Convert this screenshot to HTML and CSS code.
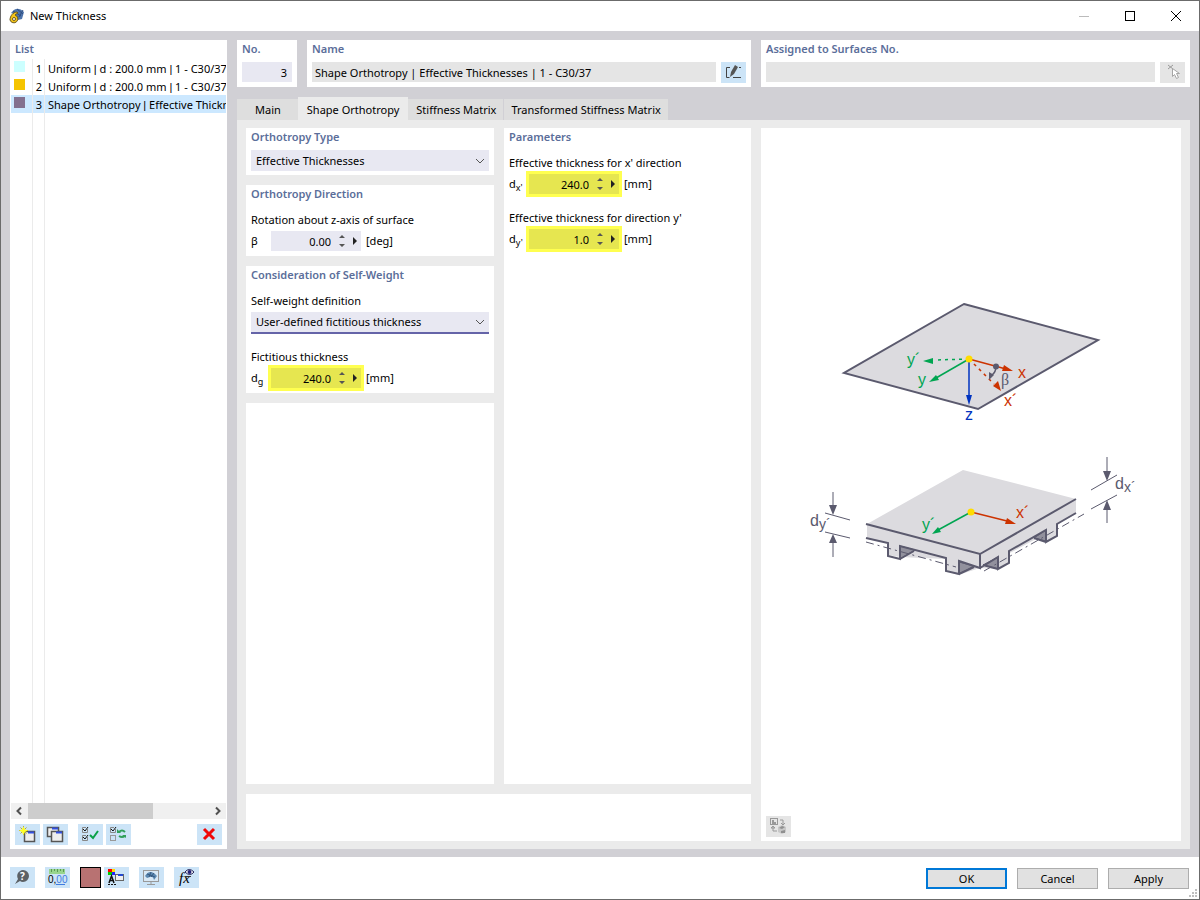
FILE: index.html
```html
<!DOCTYPE html>
<html lang="en">
<head>
    <meta charset="UTF-8">
    <meta name="viewport" content="width=device-width, initial-scale=1.0">
    <title>New Thickness</title>
    <link rel="stylesheet" href="styles.css">
</head>
<body>
    <div class="window">
        <header class="titlebar">
            <svg class="app-icon" width="16" height="16" viewBox="0 0 16 16">
                <path d="M2 5 Q8 -3 15 4 L13 11 L9 12 L5 6 Z" fill="#4d74ac"/>
                <path d="M4 3 L12 8 M8 1 L14 6 M10 9 L14 2" stroke="#2f4d80" fill="none"/>
                <path d="M8 4 C4 4 1 8 1 12 A4 4 0 1 0 6 7 Q7 6 9 5 Z" fill="#f5c518" stroke="#6b5a20"/>
                <circle cx="5" cy="11" r="1.5" fill="#fff" stroke="#6b5a20"/>
            </svg>
            <h1>New Thickness</h1>
            <div class="window-buttons">
                <button aria-label="Minimize" disabled><svg width="12" height="12"><path d="M1 6.500h10" stroke="#bbb"/></svg></button>
                <button aria-label="Maximize"><svg width="12" height="12"><rect x="1.500" y="1.500" width="9" height="9" fill="none" stroke="#000"/></svg></button>
                <button aria-label="Close"><svg width="12" height="12"><path d="M1 1l10 10M11 1L1 11" stroke="#000"/></svg></button>
            </div>
        </header>

        <main class="content">
            <section class="panel list-panel">
                <h2>List</h2>
                <div class="list">
                    <table>
                        <tr><td class="color"><span class="swatch cyan"></span></td><td class="num">1</td><td>Uniform <i>|</i> d : 200.0 mm <i>|</i> 1 - C30/37</td></tr>
                        <tr><td class="color"><span class="swatch orange"></span></td><td class="num">2</td><td>Uniform <i>|</i> d : 200.0 mm <i>|</i> 1 - C30/37</td></tr>
                        <tr class="selected"><td class="color"><span class="swatch purple"></span></td><td class="num">3</td><td>Shape Orthotropy <i>|</i> Effective Thicknesses</td></tr>
                        <tr class="rest"><td></td><td></td><td></td></tr>
                    </table>
                </div>
                <div class="scrollbar">
                    <button aria-label="Scroll left"><svg width="16" height="16"><path d="M10 4.500L6.500 8l3.500 3.500" fill="none" stroke="#505050" stroke-width="2"/></svg></button>
                    <div class="track"><div class="thumb"></div></div>
                    <button aria-label="Scroll right"><svg width="16" height="16"><path d="M7 4.500L10.500 8 7 11.500" fill="none" stroke="#505050" stroke-width="2"/></svg></button>
                </div>
                <div class="toolbar">
                    <button class="tool" aria-label="New">
                        <svg width="25" height="21"><rect x="9.500" y="7.500" width="10" height="10" fill="#eee" stroke="#555" stroke-width="1.500"/><path d="M13 8.500h6" stroke="#3250e0" stroke-width="2"/><path d="M8.500 2v9M4 6.500h9M5.500 3.500l6 6M11.500 3.500l-6 6" stroke="#b5a83a"/><path d="M8.500 2.500l1.500 3 3 1-3 1.500-1.500 3-1.500-3-3-1.500 3-1z" fill="#ff2"/></svg>
                    </button>
                    <button class="tool" aria-label="Copy">
                        <svg width="25" height="21"><rect x="4.500" y="3.500" width="11" height="9" fill="#eee" stroke="#555" stroke-width="1.500"/><path d="M9 4.500h6" stroke="#3250e0" stroke-width="2"/><rect x="8.500" y="7.500" width="11" height="10" fill="#eee" stroke="#555" stroke-width="1.500"/><path d="M13 8.500h6" stroke="#3250e0" stroke-width="2"/></svg>
                    </button>
                    <button class="tool gap" aria-label="Select all">
                        <svg width="25" height="21" fill="none"><path d="M9.500 5v3.500h-5v-5H8M9.500 13v3.500h-5v-5H8" stroke="#888"/><path d="M5 5l2 2 3-4M5 13l2 2 3-4" stroke="#111"/><path d="M12 11l3 3 5-7" stroke="#0aa147" stroke-width="2"/></svg>
                    </button>
                    <button class="tool" aria-label="Invert selection">
                        <svg width="25" height="21" fill="none"><path d="M9.500 5v3.500h-5v-5H8" stroke="#888"/><rect x="4.500" y="11.500" width="5" height="5" stroke="#999"/><path d="M5 5l2 2 3-4" stroke="#111"/><path d="M13 8q3-3 6 0M19 12q-3 2-6 0" stroke="#31a05b" stroke-width="2"/><path d="M11 5v4h4zM20 14v-3h-4z" fill="#31a05b"/></svg>
                    </button>
                    <button class="tool last" aria-label="Delete">
                        <svg width="25" height="21"><path d="M7 5l10 10M17 5L7 15" stroke="#f00808" stroke-width="3"/></svg>
                    </button>
                </div>
            </section>

            <div class="details">
                <div class="head">
                    <section class="panel">
                        <h2><label for="no">No.</label></h2>
                        <input class="field right" id="no" type="text" value="3">
                    </section>
                    <section class="panel">
                        <h2><label for="name">Name</label></h2>
                        <div class="field-row">
                            <input class="field grey" id="name" type="text" value="Shape Orthotropy | Effective Thicknesses | 1 - C30/37" readonly>
                            <button class="tool" aria-label="Edit name">
                                <svg width="25" height="21" fill="none"><path d="M9 5.500H5.500v10h3M12 15.500h8M18 5.500h2" stroke="#444"/><path d="M9 15l1-5 4-7 3 2-4 7z" fill="#555"/></svg>
                            </button>
                        </div>
                    </section>
                    <section class="panel">
                        <h2><label for="assigned">Assigned to Surfaces No.</label></h2>
                        <div class="field-row">
                            <input class="field grey" id="assigned" type="text" disabled>
                            <button class="tool grey" aria-label="Select surfaces" disabled>
                                <svg width="25" height="21"><path d="M8 3l5 4M13 3L8 7" stroke="#999"/><path d="M12.500 6.500v8l2-2 2 4 2-1-2-4h3z" fill="#fff" stroke="#a5a5a5"/></svg>
                            </button>
                        </div>
                    </section>
                </div>

                <nav class="tabs">
                    <button>Main</button>
                    <button class="active">Shape Orthotropy</button>
                    <button>Stiffness Matrix</button>
                    <button>Transformed Stiffness Matrix</button>
                </nav>

                <div class="page">
                    <div class="column">
                        <section class="panel type">
                            <h2><label for="type">Orthotropy Type</label></h2>
                            <div class="select">
                                <select id="type"><option>Effective Thicknesses</option></select>
                                <svg width="10" height="6"><path d="M1 1l4 4 4-4" fill="none" stroke="#555"/></svg>
                            </div>
                        </section>
                        <section class="panel">
                            <h2>Orthotropy Direction</h2>
                            <label class="caption" for="beta">Rotation about z-axis of surface</label>
                            <div class="value-row">
                                <span class="symbol">β</span>
                                <div class="spin">
                                    <input id="beta" type="text" value="0.00">
                                    <button aria-label="Step"><svg width="6" height="14"><path d="M0 4l3-3 3 3zM0 10l3 3 3-3z" fill="#555"/></svg></button>
                                    <button aria-label="More"><svg width="4" height="8"><path d="M0 0l4 4-4 4z" fill="#222"/></svg></button>
                                </div>
                                <span>[deg]</span>
                            </div>
                        </section>
                        <section class="panel">
                            <h2>Consideration of Self-Weight</h2>
                            <label class="caption" for="weight">Self-weight definition</label>
                            <div class="select focus">
                                <select id="weight"><option>User-defined fictitious thickness</option></select>
                                <svg width="10" height="6"><path d="M1 1l4 4 4-4" fill="none" stroke="#555"/></svg>
                            </div>
                            <label class="caption next" for="dg">Fictitious thickness</label>
                            <div class="value-row">
                                <span class="symbol">d<sub>g</sub></span>
                                <div class="spin marked">
                                    <input id="dg" type="text" value="240.0">
                                    <button aria-label="Step"><svg width="6" height="14"><path d="M0 4l3-3 3 3zM0 10l3 3 3-3z" fill="#555"/></svg></button>
                                    <button aria-label="More"><svg width="4" height="8"><path d="M0 0l4 4-4 4z" fill="#222"/></svg></button>
                                </div>
                                <span>[mm]</span>
                            </div>
                        </section>
                        <section class="panel fill"></section>
                    </div>

                    <section class="panel parameters">
                        <h2>Parameters</h2>
                        <label class="caption" for="dx">Effective thickness for x' direction</label>
                        <div class="value-row">
                            <span class="symbol">d<sub>x'</sub></span>
                            <div class="spin marked">
                                <input id="dx" type="text" value="240.0">
                                <button aria-label="Step"><svg width="6" height="14"><path d="M0 4l3-3 3 3zM0 10l3 3 3-3z" fill="#555"/></svg></button>
                                <button aria-label="More"><svg width="4" height="8"><path d="M0 0l4 4-4 4z" fill="#222"/></svg></button>
                            </div>
                            <span>[mm]</span>
                        </div>
                        <label class="caption next" for="dy">Effective thickness for direction y'</label>
                        <div class="value-row">
                            <span class="symbol">d<sub>y'</sub></span>
                            <div class="spin marked">
                                <input id="dy" type="text" value="1.0">
                                <button aria-label="Step"><svg width="6" height="14"><path d="M0 4l3-3 3 3zM0 10l3 3 3-3z" fill="#555"/></svg></button>
                                <button aria-label="More"><svg width="4" height="8"><path d="M0 0l4 4-4 4z" fill="#222"/></svg></button>
                            </div>
                            <span>[mm]</span>
                        </div>
                    </section>

                    <section class="panel message"></section>

                    <section class="panel preview">
                        <svg class="diagram" viewBox="766 128 410 688">
                            <!-- surface with local axes -->
                            <path d="M964 304L1098 340L978 409L844 373z" fill="#dcdbdf" stroke="#5b5a6e" stroke-width="2"/>
                            <g fill="none" stroke-width="1.500">
                                <path d="M969 359L935 360" stroke="#00a551" stroke-dasharray="3 4"/>
                                <path d="M969 359L936 378" stroke="#00a551"/>
                                <path d="M969 359v38" stroke="#0033c0"/>
                                <path d="M969 359l37 10" stroke="#cc3300"/>
                                <path d="M969 359l25 25" stroke="#cc3300" stroke-dasharray="3 4"/>
                                <path d="M996 366q0 6-4 9" stroke="#5b5a6e"/>
                            </g>
                            <path d="M923 361l10-3v6zM929 382l7-7 3 5z" fill="#00a551"/>
                            <path d="M969 405l-3-10h6z" fill="#0033c0"/>
                            <path d="M1013 371l-11 0 2-6zM1001 391l-8-5 5-5z" fill="#cc3300"/>
                            <path d="M989 380l0-8 5 3z" fill="#5b5a6e"/>
                            <circle cx="996" cy="366.500" r="3" fill="#5b5a6e"/>
                            <circle cx="969" cy="359" r="3.500" fill="#ffdc00"/>
                            <text class="axis-y" x="907" y="365">y´</text>
                            <text class="axis-y" x="918" y="385">y</text>
                            <text class="axis-z" x="965" y="420">z</text>
                            <text class="axis-x" x="1018" y="378">x</text>
                            <text class="axis-x" x="1004" y="406">x´</text>
                            <text class="beta" x="1001" y="385">β</text>

                            <!-- ribbed plate -->
                            <path d="M963 470L1076 499V514L1057 524V536L1046 542L1036 539L1008 554V564L998 569L980 568L958 575L946 571V559L900 557L888 555V543L867 538V524z" fill="#dcdbdf"/>
                            <path d="M900 546L915 550L900 559zM959 562L974 566L959 574zM998 557V569L983 565zM1046 530V541L1034 538z" fill="#92919d" stroke="#5b5a6e"/>
                            <path d="M866 524L980 554L1076 499M980 554V568L959 561V574L946 571V558L900 546V559L888 556V543L866 538M980 568L998 557V569L1009 563V551L1046 530V542L1057 536V524L1076 513M900 559L914 551M959 574L974 567M998 569L983 565M1046 542L1034 538" fill="none" stroke="#5b5a6e" stroke-width="2"/>
                            <path d="M866 542L956 567M984 571L1084 514" fill="none" stroke="#5b5a6e" stroke-dasharray="8 4 2 4"/>
                            <path d="M971 512l36 9" stroke="#cc3300" stroke-width="1.500"/>
                            <path d="M971 512l-33 18" stroke="#00a551" stroke-width="1.500"/>
                            <path d="M1016 524l-11 0 2-6z" fill="#cc3300"/>
                            <path d="M932 534l6-7 3 5z" fill="#00a551"/>
                            <circle cx="971" cy="512" r="3.500" fill="#ffdc00"/>
                            <text class="axis-y" x="922" y="530">y´</text>
                            <text class="axis-x" x="1016" y="518">x´</text>

                            <!-- dimensions -->
                            <path d="M833 492v18M833 538v19M825 513l25 7M825 532l25 6M1107 457v18M1107 505v18M1091 490l26-15M1091 509l26-14" stroke="#5b5a6e"/>
                            <path d="M833 515l-4-10h8zM833 534l-4 9h8zM1107 481l-4-10h8zM1107 500l-4 10h8z" fill="#5b5a6e"/>
                            <text class="dim" x="810" y="526">d<tspan class="dim-sub" dy="3">y´</tspan></text>
                            <text class="dim" x="1115" y="489">d<tspan class="dim-sub" dy="3">x´</tspan></text>
                        </svg>
                        <button class="tool grey" aria-label="Switch view" disabled>
                            <svg width="25" height="21" fill="none"><rect x="4.500" y="2.500" width="7" height="6" stroke="#999"/><path d="M6 4v4h4V6H8V4z" fill="#999"/><path d="M14 4h3v5M15 7l2 2 2-2M5 12h4M7 11v4h4M5 12l2-2 2 2" stroke="#999"/><path d="M12 11l4-2 4 2v5l-4 2-4-2z" fill="#c8c8c8"/><path d="M13 12l3-2 3 1-3 2zM15 15l4-1v3h-4z" fill="#909090"/></svg>
                        </button>
                    </section>
                </div>
            </div>
        </main>

        <footer class="footer">
            <button class="tool" aria-label="Help">
                <svg width="25" height="21"><path d="M13 3a6 6 0 0 1 0 12q-2 0-3-1l-5 3 3-5A6 6 0 0 1 13 3z" fill="#5c6165"/><text class="icon-help" x="10" y="13">?</text></svg>
            </button>
            <button class="tool" aria-label="Units">
                <svg width="25" height="21"><rect x="4" y="2" width="16" height="5" fill="#98d58e"/><path d="M6.500 2v3M9.500 2v2M12.500 2v3M15.500 2v2M18.500 2v3" stroke="#5a9a55"/><text class="icon-num" x="3" y="16">0,<tspan fill="#3d7be0">00</tspan></text><path d="M11 17.500h9" stroke="#3d7be0"/></svg>
            </button>
            <button class="color-button" aria-label="Color"></button>
            <button class="tool near" aria-label="Display">
                <svg width="25" height="21"><path d="M4 2h4v3H4z" fill="#f00"/><path d="M8 2h3v3H8z" fill="#fd0"/><path d="M4 5h4v3H4z" fill="#0c0"/><path d="M8 5h3v3H8z" fill="#22f"/><path d="M5 16l2.500-7 2.500 7M6 13.500h4" fill="none" stroke="#111" stroke-width="1.500"/><path d="M4 17.500h2M7 17.500h2M10 17.500h2" stroke="#111"/><rect x="11.500" y="7.500" width="8" height="6" fill="#eee" stroke="#666"/><path d="M14 8h5" stroke="#2449d0" stroke-width="2"/></svg>
            </button>
            <button class="tool" aria-label="View">
                <svg width="25" height="21"><rect x="4.500" y="3.500" width="15" height="11" fill="#d8e8f5" stroke="#999"/><path d="M6 9q5-8 12 0l-3 4q-1-4-4-3l-3 1z" fill="#5a87b0"/><path d="M8 7l8 3M12 5l-2 5M15 6l-3 4" stroke="#36597f"/><path d="M12 15v3M8 17.500h8" stroke="#999"/></svg>
            </button>
            <button class="tool" aria-label="Formula">
                <svg width="25" height="21"><text class="icon-fx" x="5" y="16">fx</text><path d="M11 9.500h6" stroke="#333"/><path d="M11 5q4-5 9 0-4 5-9 0z" fill="#fff" stroke="#222255"/><circle cx="15.500" cy="5" r="2" fill="#222277"/></svg>
            </button>
            <div class="actions">
                <button class="primary">OK</button>
                <button>Cancel</button>
                <button>Apply</button>
            </div>
            <svg class="grip" width="8" height="8" fill="#bfbfbf"><path d="M6 0h2v2H6zM3 3h2v2H3zM6 3h2v2H6zM0 6h2v2H0zM3 6h2v2H3zM6 6h2v2H6z"/></svg>
        </footer>
    </div>
</body>
</html>
```

FILE: styles.css
```css
* {
    box-sizing: border-box;
}
body {
    margin: 0;
    font-family: "Noto Sans", "Open Sans", sans-serif;
    font-size: 11px;
    line-height: 16px;
    color: #000;
}
button, input, select {
    font: inherit;
    color: inherit;
    margin: 0;
    padding: 0;
    border: none;
    border-radius: 0;
    background: none;
}
svg {
    display: block;
}
h1 {
    margin: 0;
    font-size: 11px;
    font-weight: normal;
}
h2 {
    margin: 0;
    font-size: 11px;
    line-height: 18px;
    font-weight: 600;
    color: #5b6e9a;
}
.window {
    display: flex;
    flex-direction: column;
    height: 100vh;
    border: 1px solid #6b6b6b;
    background: #fff;
}

/* title bar */
.titlebar {
    display: flex;
    align-items: center;
    height: 30px;
    padding-left: 8px;
    gap: 5px;
}
.window-buttons {
    display: flex;
    margin-left: auto;
}
.window-buttons button {
    display: flex;
    align-items: center;
    justify-content: center;
    width: 46px;
    height: 28px;
}

/* content */
.content {
    flex: 1;
    display: flex;
    gap: 10px;
    min-height: 0;
    padding: 9px 9px 8px;
    background: #d1d0d5;
}
.panel {
    min-width: 0;
    padding: 0 5px 5px;
    background: #fff;
}
.list-panel {
    display: flex;
    flex-direction: column;
    width: 217px;
    padding: 0 1px 4px;
}
.list-panel h2 {
    padding-left: 4px;
}
.list {
    flex: 1;
    overflow: hidden;
    padding-top: 1px;
}
.list table {
    width: 100%;
    height: 100%;
    table-layout: fixed;
    border-spacing: 0;
}
.list td {
    height: 18px;
    padding: 2px 0 0 3px;
    overflow: hidden;
    white-space: nowrap;
}
.list i {
    font-family: "Liberation Sans", Arial, sans-serif;
    font-style: normal;
}
.list td:not(:last-child) {
    border-right: 1px solid #ebebeb;
}
.list .color {
    width: 22px;
    padding: 0 0 3px 3px;
}
.list .num {
    width: 12px;
    padding: 2px 2px 0;
    text-align: right;
}
.list .rest td {
    height: auto;
}
.list .selected {
    background: #cce8ff;
}
.swatch {
    display: block;
    width: 11px;
    height: 11px;
}
.cyan { background: #ccffff; }
.orange { background: #f5c400; }
.purple { background: #83708f; }
.scrollbar {
    display: flex;
    height: 16px;
    background: #f0f0f0;
}
.scrollbar button {
    width: 17px;
}
.track {
    flex: 1;
}
.thumb {
    width: 69%;
    height: 16px;
    background: #cdcdcd;
}
.toolbar {
    display: flex;
    gap: 3px;
    padding: 5px 4px 0;
}
.tool {
    flex: none;
    width: 25px;
    height: 21px;
    background: #cce4f7;
}
.tool.grey {
    background: #e5e5e5;
}
.toolbar .gap {
    margin-left: 7px;
}
.toolbar .last {
    margin-left: auto;
}

/* right side */
.details {
    flex: 1;
    display: flex;
    flex-direction: column;
    min-width: 0;
}
.head {
    display: grid;
    grid-template-columns: 60px 444fr 429fr;
    gap: 10px;
}
.head .panel, .panel.type, .panel.preview {
    padding-bottom: 4px;
}
.field {
    display: block;
    width: 100%;
    height: 20px;
    margin-top: 4px;
    padding: 0 3px;
    background: #e8e8f2;
}
.field.right {
    padding-right: 5px;
    text-align: right;
}
.field.grey {
    background: #e5e5e5;
}
.field-row {
    display: flex;
    gap: 5px;
    margin-top: 4px;
}
.field-row .field {
    flex: 1;
    min-width: 0;
    margin: 0;
}
.tabs {
    display: flex;
    align-items: flex-end;
    height: 33px;
}
.tabs button {
    height: 21px;
    padding: 0 7px;
    border-right: 1px solid #d1d0d5;
    background: #dedede;
}
.tabs button:first-child {
    padding: 0 17px 0 18px;
    border: none;
}
.tabs .active {
    height: 23px;
    padding: 2px 9px 0;
    border: none;
    background: #ebebeb;
}
.tabs .active + button {
    padding-left: 8px;
}
.page {
    flex: 1;
    display: grid;
    grid-template-columns: 248fr 247fr 420fr;
    grid-template-rows: 1fr 47px;
    gap: 10px;
    min-height: 0;
    padding: 8px 9px;
    background: #ebebeb;
}
.column {
    display: flex;
    flex-direction: column;
    gap: 10px;
}
.fill {
    flex: 1;
}
.message {
    grid-column: 1 / 3;
    grid-row: 2;
}
.preview {
    display: flex;
    flex-direction: column;
    grid-column: 3;
    grid-row: 1 / 3;
}
.caption {
    display: block;
    margin: 9px 0 3px;
}
.caption.next {
    margin-top: 15px;
}
.parameters .next {
    margin-top: 16px;
}
.select {
    display: flex;
    align-items: center;
    height: 21px;
    margin-top: 4px;
    padding-right: 4px;
    background: #e8e8f2;
}
.select select {
    flex: 1;
    height: 100%;
    padding-left: 5px;
    appearance: none;
    outline: none;
}
.caption + .select {
    margin-top: 0;
}
.select.focus {
    height: 22px;
    border-bottom: 2px solid #6564a8;
}
.value-row {
    display: flex;
    align-items: center;
    height: 20px;
}
.symbol {
    width: 20px;
}
.symbol sub {
    font-size: 9px;
    line-height: 0;
}
.spin {
    display: flex;
    align-items: center;
    gap: 8px;
    width: 90px;
    height: 20px;
    margin-right: 5px;
    padding-right: 4px;
    background: #e8e8f2;
}
.spin input {
    flex: 1;
    min-width: 0;
    height: 20px;
    text-align: right;
}
.spin.marked {
    background: #e6e650;
    box-shadow: 0 0 0 3px #ffff50;
}
.diagram {
    flex: 1;
    width: 100%;
    min-height: 0;
}
.diagram text {
    font-family: "Liberation Sans", Arial, sans-serif;
    font-size: 16px;
}
.diagram .axis-x { fill: #cc3300; }
.diagram .axis-y { fill: #00a551; }
.diagram .axis-z { fill: #0033c0; }
.diagram .dim { fill: #5b5a6e; }
.diagram .dim-sub { font-size: 14px; }
.diagram .beta {
    fill: #5b5a6e;
    font-family: "Liberation Serif", serif;
}

/* footer */
.footer {
    position: relative;
    display: flex;
    align-items: center;
    gap: 10px;
    height: 42px;
    padding: 0 10px 0 9px;
}
.footer > button {
    margin-bottom: 1px;
}
.color-button {
    width: 21px;
    height: 21px;
    border: 1px solid #000;
    background: #b87272;
}
.tool.near {
    margin-left: -7px;
}
.actions {
    display: flex;
    gap: 10px;
    margin: 1px 0 0 auto;
}
.actions button {
    width: 81px;
    height: 21px;
    border: 1px solid #adadad;
    background: #e1e1e1;
}
.actions .primary {
    border: 2px solid #0078d7;
}
.icon-help {
    fill: #fff;
    font-size: 10px;
    font-weight: bold;
}
.icon-num {
    font-family: "Liberation Sans", Arial, sans-serif;
    font-size: 10px;
}
.icon-fx {
    font-family: "Liberation Serif", serif;
    font-size: 15px;
    font-style: italic;
}
.grip {
    position: absolute;
    right: 2px;
    bottom: 2px;
}
```
